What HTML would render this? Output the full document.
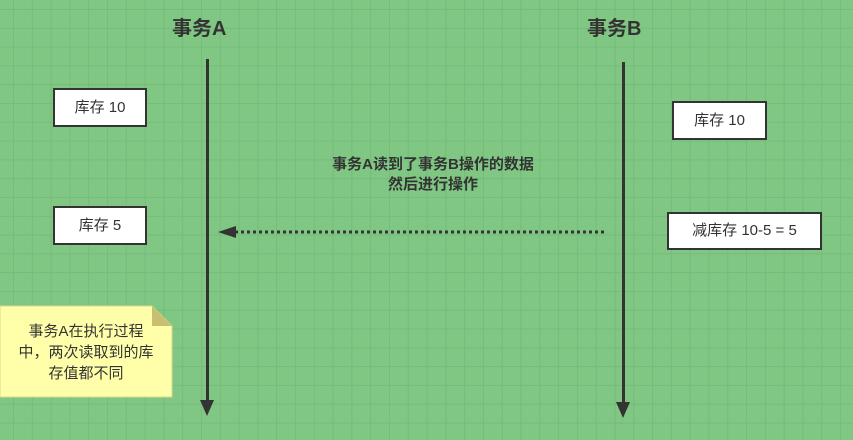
<!DOCTYPE html>
<html><head><meta charset="utf-8"><style>
body{margin:0;width:853px;height:440px;overflow:hidden;position:relative;
background-color:#80c784;
background-image:linear-gradient(#75bb7a 1px,transparent 1px),linear-gradient(90deg,#75bb7a 1px,transparent 1px);
background-size:18.8px 18.8px;background-position:13px 9px;
font-family:"Liberation Sans","Noto Sans CJK SC",sans-serif;color:#333}
.t{position:absolute;font-weight:bold;font-size:20px;color:#333}
.b{position:absolute;background:#fff;border:2px solid #333;box-sizing:border-box;font-size:15px;text-align:center;color:#333}
.v{position:absolute;width:3px;background:#333}
</style></head><body>
<div class="t" style="left:172px;top:12px">事务A</div>
<div class="t" style="left:587px;top:12px">事务B</div>
<div class="v" style="left:206px;top:59px;height:346px"></div>
<div class="v" style="left:622px;top:62px;height:343px"></div>
<svg style="position:absolute;left:0;top:0" width="853" height="440">
<polygon points="200,400 214,400 207,416" fill="#333"/>
<polygon points="616,402 630,402 623,418" fill="#333"/>
<line x1="235" y1="232" x2="605" y2="232" stroke="#333" stroke-width="3" stroke-dasharray="3,3"/>
<polygon points="218,232 236,226 236,238" fill="#333"/>
<polygon points="0,306 152,306 172,326 172,397 0,397" fill="#ffffaa" stroke="#d8d890" stroke-width="1"/>
<polygon points="152,306 172,326 152,326" fill="#c8c070"/>
</svg>
<div class="b" style="left:53px;top:88px;width:94px;height:39px;line-height:35px">库存 10</div>
<div class="b" style="left:53px;top:206px;width:94px;height:39px;line-height:35px">库存 5</div>
<div class="b" style="left:672px;top:101px;width:95px;height:39px;line-height:35px">库存 10</div>
<div class="b" style="left:667px;top:212px;width:155px;height:38px;line-height:34px">减库存 10-5 = 5</div>
<div style="position:absolute;left:300px;top:155px;width:266px;text-align:center;font-weight:bold;font-size:15px;line-height:20px">事务A读到了事务B操作的数据<br>然后进行操作</div>
<div style="position:absolute;left:2px;top:321px;width:168px;text-align:center;font-size:15px;line-height:21px">事务A在执行过程<br>中，两次读取到的库<br>存值都不同</div>
</body></html>
